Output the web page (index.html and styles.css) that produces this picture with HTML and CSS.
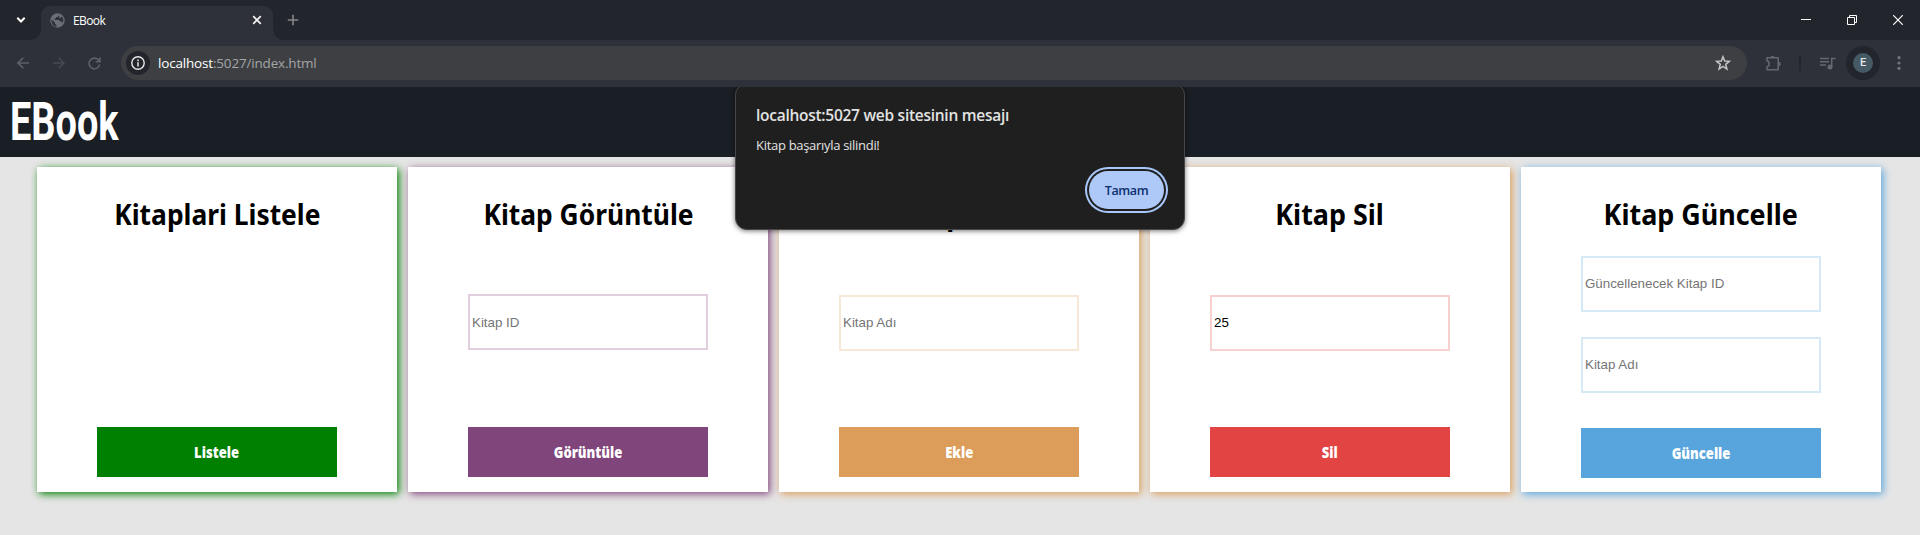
FILE: index.html
```html
<!DOCTYPE html>
<html lang="tr">
<head>
<meta charset="utf-8">
<title>EBook</title>
<link rel="stylesheet" href="styles.css">
</head>
<body>
<div class="tabstrip">
  <svg class="tab-search" width="10" height="8" viewBox="0 0 10 8"><path d="M1.3 1.8 5 5.5l3.700-3.700" fill="none" stroke="#fff" stroke-width="2"/></svg>
  <div class="tab">
    <svg width="15" height="15" viewBox="0 0 15 15"><circle cx="7.500" cy="7.500" r="7.200" fill="#6b6f75"/><path d="M1.500 6.500 5 9.500v1.500l1.500 1v1.700C3 13.200 1 10.200 1.500 6.500M9 1.500v1.500L7.500 4H6v1.500H4.500V7H9l1 1.500h1.500l1 1.500c1.200-2 1.200-4.500-.5-6.500L10.500 5H9.500V3.500" fill="#2e3139"/></svg>
    <span class="tab-title">EBook</span>
    <svg width="10" height="10" viewBox="0 0 10 10"><path d="M1.200 1.200l7.600 7.600M8.800 1.200 1.200 8.800" stroke="#f3f3f3" stroke-width="1.700"/></svg>
  </div>
  <svg class="new-tab" width="12" height="12" viewBox="0 0 12 12"><path d="M6 .8v10.400M.8 6h10.400" stroke="#85878b" stroke-width="1.600"/></svg>
  <div class="window-buttons">
    <svg width="10" height="12" viewBox="0 0 10 12"><path d="M0 5.500h10" stroke="#fff"/></svg>
    <svg width="10" height="10" viewBox="0 0 10 10"><path d="M.5 2.500h7v7h-7zM2.500 2.500v-2h7v7h-2" fill="none" stroke="#fff"/></svg>
    <svg width="10" height="10" viewBox="0 0 10 10"><path d="M.2.2l9.600 9.600M9.800.2.2 9.800" stroke="#fff" stroke-width="1.200"/></svg>
  </div>
</div>
<div class="toolbar">
  <div class="nav">
    <svg width="12" height="12" viewBox="0 0 12 12"><path d="M12 6H1M6.300.7 1 6l5.300 5.300" fill="none" stroke="#5e6167" stroke-width="1.600"/></svg>
    <svg width="12" height="12" viewBox="0 0 12 12"><path d="M0 6h11M5.700.7 11 6l-5.300 5.300" fill="none" stroke="#464950" stroke-width="1.500"/></svg>
    <svg width="13" height="13" viewBox="0 0 13 13"><path d="M11.600 7.300A5.300 5.300 0 1 1 10.800 3.500L11.800 4.500M12 .5v4.300H7.700" fill="none" stroke="#5e6167" stroke-width="1.600"/></svg>
  </div>
  <div class="address">
    <div class="site-info"><svg width="14" height="14" viewBox="0 0 14 14"><circle cx="7" cy="7" r="6.200" fill="none" stroke="#e8e8e8" stroke-width="1.400"/><path d="M7 6.300v4.200M7 3.500v1.700" stroke="#e8e8e8" stroke-width="1.500"/></svg></div>
    <span class="url"><b>localhost</b>:5027/index.html</span>
    <svg width="16" height="16" viewBox="0 0 16 16"><path d="M8 1.700 9.700 6l4.700.3-3.700 3 1.200 4.700L8 11.400 4.100 14l1.200-4.700-3.700-3L6.300 6z" fill="none" stroke="#c4c5c6" stroke-width="1.500"/></svg>
  </div>
  <svg class="extensions" width="17" height="17" viewBox="0 0 17 17"><path d="M2 2.800H13.200V14.800H2V11.700C5 11.200 5 6.400 2 6z" fill="none" stroke="#64676d" stroke-width="1.600" stroke-linejoin="round"/><path d="M5.500 2.800a2 2 0 0 1 4 0zM13.500 6.800a2.200 2.200 0 0 1 0 4.400z" fill="#64676d"/></svg>
  <span class="divider"></span>
  <svg class="media" width="16" height="13" viewBox="0 0 16 13"><path d="M0 1.500h9M0 4.700h9M0 7.900h6M11.700 10V1.500H15.500" fill="none" stroke="#64676d" stroke-width="1.500"/><circle cx="10" cy="10" r="2.500" fill="#64676d"/></svg>
  <div class="profile"><span>E</span></div>
  <svg class="more" width="4" height="14" viewBox="0 0 4 14"><g fill="#74767b"><circle cx="2" cy="1.700" r="1.600"/><circle cx="2" cy="7" r="1.600"/><circle cx="2" cy="12.300" r="1.600"/></g></svg>
</div>
<div class="page">
  <header class="site-header"><span class="logo">EBook</span></header>
  <main class="cards">
    <section class="card list"><h2><span>Kitaplari Listele</span></h2><div class="fields"></div><button><span>Listele</span></button></section>
    <section class="card view"><h2><span>Kitap Görüntüle</span></h2><div class="fields"><input placeholder="Kitap ID"></div><button><span>Görüntüle</span></button></section>
    <section class="card add"><h2><span>Kitap Ekle</span></h2><div class="fields"><input placeholder="Kitap Adı"></div><button><span>Ekle</span></button></section>
    <section class="card delete"><h2><span>Kitap Sil</span></h2><div class="fields"><input value="25"></div><button><span>Sil</span></button></section>
    <section class="card update"><h2><span>Kitap Güncelle</span></h2><div class="fields"><input placeholder="Güncellenecek Kitap ID"><input placeholder="Kitap Adı"></div><button><span>Güncelle</span></button></section>
  </main>
  <div class="dialog">
    <div class="dialog-title"><span>localhost:5027 web sitesinin mesajı</span></div>
    <div class="dialog-message"><span>Kitap başarıyla silindi!</span></div>
    <button class="ok"><span>Tamam</span></button>
  </div>
</div>
</body>
</html>
```
FILE: styles.css
```css
* { box-sizing: border-box; }
body { margin: 0; height: 535px; overflow: hidden; background: #e5e5e5; font-family: "Open Sans", sans-serif; }
svg { display: block; flex: none; }
button { border: 0; padding: 0; }

.tabstrip { height: 40px; background: #22252c; display: flex; align-items: center; }
.tab-search { margin-left: 16px; }
.tab { position: relative; width: 232px; height: 34px; align-self: flex-end; margin-left: 15px; padding: 0 11px 6px 9px; display: flex; align-items: center; gap: 8px; background: #2e3139; border-radius: 9px 9px 0 0; }
.tab::before, .tab::after { content: ""; position: absolute; bottom: 0; width: 10px; height: 10px; }
.tab::before { left: -10px; background: radial-gradient(circle at 0 0, transparent 9.500px, #2e3139 10px); }
.tab::after { right: -10px; background: radial-gradient(circle at 100% 0, transparent 9.500px, #2e3139 10px); }
.tab-title { flex: 1; color: #fff; font-size: 12px; line-height: 16px; letter-spacing: -0.600px; padding-top: 2px; }
.new-tab { margin-left: 14px; }
.window-buttons { margin-left: auto; margin-right: 17px; display: flex; align-items: center; gap: 36px; }

.toolbar { height: 47px; background: #2e3139; display: flex; align-items: center; }
.nav { width: 121px; padding: 0 20px 0 17px; display: flex; justify-content: space-between; align-items: center; }
.address { width: 1626px; height: 34px; border-radius: 17px; background: #3d3f42; display: flex; align-items: center; padding: 0 16px 0 5px; margin-bottom: 1px; }
.nav, .toolbar > svg, .profile, .divider { margin-bottom: 1px; }
.site-info { width: 24px; height: 24px; border-radius: 50%; background: #22252c; display: grid; place-items: center; }
.url { flex: 1; margin-left: 8px; font-size: 13.500px; letter-spacing: -0.180px; color: #a3a5a7; }
.url b { font-weight: 400; color: #fff; }
.extensions { margin-left: 18px; }
.divider { width: 2px; height: 16px; margin-left: 17px; background: #22252c; }
.media { margin-left: 19px; }
.profile { width: 34px; height: 34px; margin-left: 10px; border-radius: 50%; background: #22252c; display: grid; place-items: center; }
.profile span { width: 20px; height: 20px; border-radius: 50%; background: #455a64; color: #e6e6e6; font: 500 11px/20px Roboto, sans-serif; text-align: center; }
.more { margin-left: 17px; }

.page { position: relative; height: 448px; overflow: hidden; }
.site-header { height: 70px; background: #1a1e25; padding-left: 10px; }
.logo { display: inline-block; color: #fff; font: 700 53px/70px Roboto, sans-serif; transform: scaleX(.715); transform-origin: left; }
.cards { display: flex; gap: 11px; padding: 10px 0 0 37px; }
.card { flex: none; width: 360px; height: 325px; padding-bottom: 15px; background: #fff; display: flex; flex-direction: column; align-items: center; box-shadow: 2px 2px 8px var(--tone); }
.card h2 { margin: 0; height: 87px; font: 700 29px/94px "Noto Sans", sans-serif; white-space: nowrap; color: #000; }
.card h2 span { display: inline-block; transform: scaleX(.91); }
.card.update h2 span, .card.delete h2 span { transform: scaleX(.928); }
.fields { flex: 1; padding-top: 40px; display: flex; flex-direction: column; gap: 25px; }
.card input { width: 240px; height: 56px; padding: 1px 2px; border: 2px solid var(--line); border-radius: 0; outline: 0; background: #fff; color: #000; font: 13.333px "Liberation Sans", sans-serif; }
.card input::placeholder { color: #757575; }
.card button { width: 240px; height: 50px; background: var(--fill); color: #fff; font: 800 16px "Open Sans", sans-serif; }
.card button span { display: inline-block; transform: scaleX(.815); }
.list { --tone: #008000; --fill: #008000; }
.view { --tone: #80457b; --fill: #80457b; --line: #e0d0df; }
.add { --tone: #db9d59; --fill: #db9d59; --line: #f6e7d6; }
.delete { --tone: #db9d59; --fill: #e24343; --line: #f8d0d0; }
.update { --tone: #57a5dc; --fill: #57a5dc; --line: #d5e9f6; }
.add .fields, .delete .fields { padding-top: 41px; }
.add input, .delete input, .update input { padding-bottom: 3px; }
.update .fields { padding-top: 2px; }
.update { padding-bottom: 14px; }

/* Native alert, drawn over the page and clipped by the toolbar */
.dialog { position: absolute; left: 735px; top: -4px; width: 450px; height: 147px; padding: 19px 19px 0 20px; display: flex; flex-direction: column; background: #1f1f1f; border: 1px solid #484848; border-radius: 12px; box-shadow: 0 1px 5px rgba(0,0,0,.55); color: #e3e3e3; }
.dialog span { display: inline-block; }
.dialog-title { font-weight: 600; font-size: 15.500px; line-height: 24px; letter-spacing: -.27px; white-space: nowrap; }
.dialog-message { margin-top: 8px; font-size: 13px; line-height: 20px; letter-spacing: -.3px; }
.ok { align-self: flex-end; margin-top: 16px; margin-right: 1px; width: 75px; height: 38px; border-radius: 19px; background: #aec9f8; color: #0c2f6e; font: 600 12.500px "Open Sans", sans-serif; letter-spacing: -.4px; box-shadow: 0 0 0 2px #1f1f1f, 0 0 0 4px #a8c7fa; }
```
